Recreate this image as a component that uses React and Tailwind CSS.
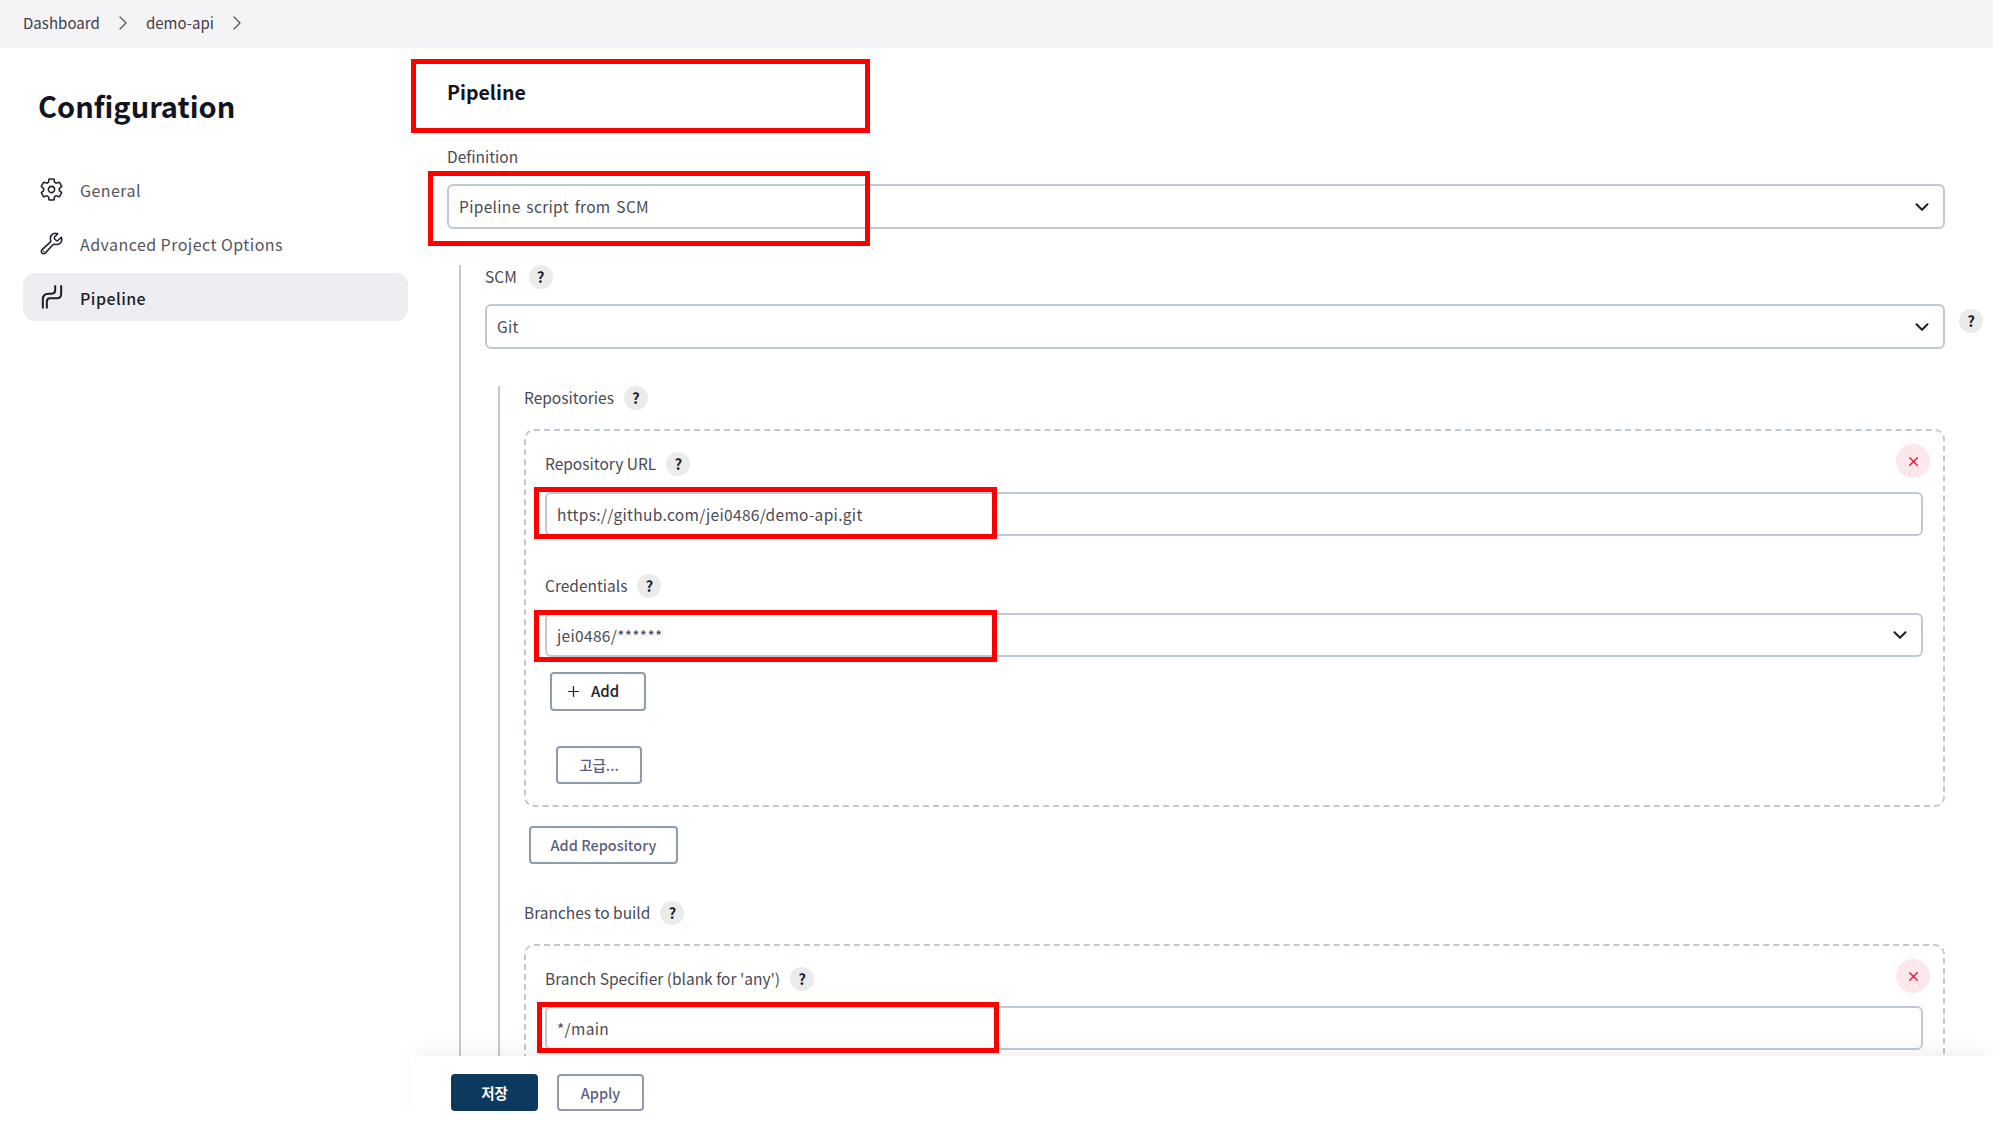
import React from 'react';
import { ChevronDown, ChevronRight, Plus, X } from 'lucide-react';
import { IoSettingsOutline, IoBuildOutline } from 'react-icons/io5';

const PipelineIcon = () => (
  <svg viewBox="0 0 65 72" className="w-[22px] h-[24px]" fill="none" stroke="currentColor" strokeWidth="6" strokeLinecap="round">
    <path d="M5 68V43Q5 26 22 26H32Q42 26 42 16V3" />
    <path d="M17 68V50Q17 40 27 40H47Q60 40 60 27V3" />
  </svg>
);

const Help = () => (
  <span className="w-6 h-6 rounded-full bg-[#ebebeb] text-[#20202c] flex items-center justify-center text-[15px] font-bold shrink-0">?</span>
);

const Label = ({ children, className = '' }) => (
  <div className={`flex items-center gap-[10px] h-6 text-[15.500px] text-[#4a4a55] ${className}`}>
    <span>{children}</span>
    <Help />
  </div>
);

const Select = ({ value, className = '' }) => (
  <div className={`h-[45px] flex-1 flex items-center justify-between pl-[10px] pr-[10px] border-2 border-[#c0c9d2] rounded-[6px] bg-white text-[15.500px] tracking-[0.32px] [word-spacing:2px] text-[#4a4a55] ${className}`}>
    <span className="pt-[1px]">{value}</span>
    <ChevronDown className="w-[22px] h-[22px] text-[#20202c]" strokeWidth={2.25} />
  </div>
);

const Input = ({ value }) => (
  <div className="h-[44px] flex items-center pl-[10px] pt-[1px] border-2 border-[#c0c9d2] rounded-[6px] bg-white text-[15.500px] tracking-[0.32px] text-[#4a4a55]">
    {value}
  </div>
);

const RedBox = ({ className }) => (
  <div className={`absolute border-[5px] border-[#ff0000] pointer-events-none ${className}`} />
);

const RemoveButton = () => (
  <span className="absolute right-[13px] top-[13px] w-[34px] h-[34px] rounded-full bg-[#fce8ea] flex items-center justify-center text-[#e8173f]">
    <X className="w-[15px] h-[15px]" strokeWidth={2.25} />
  </span>
);

const NavItem = ({ icon, label, active }) => (
  <div className={`h-[48px] flex items-center gap-[16px] pl-[16px] rounded-[12px] text-[16px] ${active ? 'bg-[#eeeef2] font-medium text-[#20202c]' : 'text-[#55555f]'}`}>
    <span className="w-[25px] h-[25px] flex items-center justify-center text-[#20202c] text-[27px]">{icon}</span>
    <span className="pt-[2px] tracking-[0.45px]">{label}</span>
  </div>
);

const OutlineButton = ({ children, className = '' }) => (
  <div className={`flex items-center justify-center border-2 border-[#8d9caa] rounded-[4px] bg-white text-[14.500px] font-medium text-[#5c5f80] ${className}`}>
    {children}
  </div>
);

export default function App() {
  return (
    <div className="h-screen overflow-hidden bg-white flex flex-col font-['Noto_Sans_CJK_KR','Noto_Sans',sans-serif]">
      <div className="h-[48px] shrink-0 bg-[#f4f4f6] flex items-center pl-[23px] pb-[2px] text-[15px] tracking-[0.05px] text-[#3c3c48]">
        <span>Dashboard</span>
        <ChevronRight className="w-6 h-6 mx-[11px] text-[#55555f]" strokeWidth={1.25} />
        <span>demo-api</span>
        <ChevronRight className="w-6 h-6 mx-[11px] text-[#55555f]" strokeWidth={1.25} />
      </div>

      <div className="flex-1 flex min-h-0 relative">
        <aside className="w-[411px] shrink-0 pl-[23px] pr-[3px]">
          <h1 className="pl-[15px] mt-[37px] text-[29px] leading-[40px] font-semibold text-[#14141f]">Configuration</h1>
          <nav className="mt-[40px] flex flex-col gap-[6px]">
            <NavItem icon={<IoSettingsOutline />} label="General" />
            <NavItem icon={<IoBuildOutline />} label="Advanced Project Options" />
            <NavItem icon={<PipelineIcon />} label="Pipeline" active />
          </nav>
        </aside>

        <main className="flex-1 pl-[36px] pr-[48px]">
          <div className="relative h-[85px] flex items-center pt-[2px]">
            <h2 className="text-[19.500px] font-semibold text-[#14141f]">Pipeline</h2>
            <RedBox className="-left-[36px] top-[11px] w-[459px] h-[74px]" />
          </div>
          <div className="mt-[12px] h-[24px] flex items-center text-[15.500px] text-[#4a4a55]">Definition</div>
          <div className="relative mt-[15px] flex">
            <Select value="Pipeline script from SCM" />
            <RedBox className="-left-[19px] -top-[13px] w-[442px] h-[75px]" />
          </div>

          <div className="mt-[36px] ml-[12px] pl-[24px] border-l-2 border-[#c0c9d2]">
            <Label className="mt-[2px] gap-[12px]">SCM</Label>
            <div className="relative mt-[15px] flex">
              <Select value="Git" />
              <span className="absolute -right-[38px] top-[5px]"><Help /></span>
            </div>

            <div className="mt-[37px] ml-[13px] pl-[24px] border-l-2 border-[#c0c9d2]">
              <Label>Repositories</Label>
              <div className="relative mt-[19px] h-[378px] border-2 border-dashed border-[#c0c9d2] rounded-[10px] pl-[19px] pr-[20px] pt-[21px]">
                <RemoveButton />
                <Label>Repository URL</Label>
                <div className="relative mt-[16px]">
                  <Input value="https://github.com/jei0486/demo-api.git" />
                  <RedBox className="-left-[11px] -top-[5px] w-[463px] h-[52px]" />
                </div>
                <Label className="mt-[38px]">Credentials</Label>
                <div className="relative mt-[15px] flex">
                  <Select value="jei0486/******" className="h-[44px]!" />
                  <RedBox className="-left-[11px] -top-[3px] w-[463px] h-[52px]" />
                </div>
                <OutlineButton className="mt-[15px] ml-[5px] w-[96px] h-[39px] gap-[9px] justify-start pl-[13px] text-[#20202c]! text-[15px]!">
                  <Plus className="w-[17px] h-[17px]" strokeWidth={1.75} />
                  <span>Add</span>
                </OutlineButton>
                <OutlineButton className="mt-[35px] ml-[11px] w-[86px] h-[38px]">고급...</OutlineButton>
              </div>
              <OutlineButton className="mt-[19px] ml-[5px] w-[149px] h-[38px]">Add Repository</OutlineButton>
              <Label className="mt-[37px]">Branches to build</Label>
              <div className="relative mt-[19px] h-[200px] border-2 border-dashed border-[#c0c9d2] rounded-[10px] pl-[19px] pr-[20px] pt-[21px]">
                <RemoveButton />
                <Label>Branch Specifier (blank for 'any')</Label>
                <div className="relative mt-[15px]">
                  <Input value="*/main" />
                  <RedBox className="-left-[8px] -top-[4px] w-[462px] h-[51px]" />
                </div>
              </div>
            </div>
          </div>
        </main>

        <footer className="absolute left-[411px] right-0 bottom-0 h-[69px] bg-white flex items-start pt-[18px] gap-[19px] pl-[40px] shadow-[0_-10px_20px_-6px_rgba(0,0,0,0.07)]">
          <div className="w-[87px] h-[37px] rounded-[4px] bg-[#0b3a5e] text-white text-[14.500px] font-semibold flex items-center justify-center">저장</div>
          <OutlineButton className="w-[87px] h-[37px]">Apply</OutlineButton>
        </footer>
      </div>
    </div>
  );
}
